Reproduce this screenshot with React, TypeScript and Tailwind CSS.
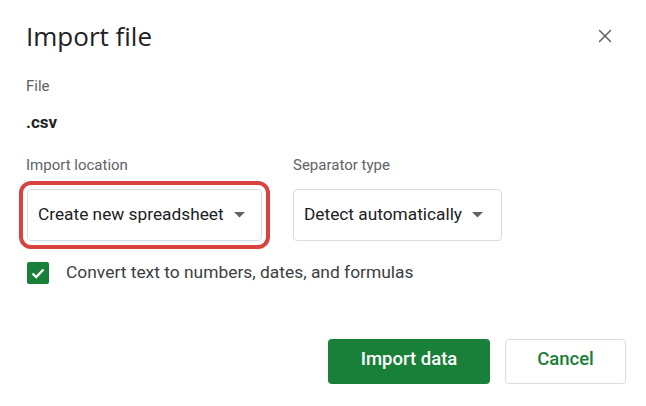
import { X } from "lucide-react"

function Caret() {
  return (
    <svg width="11" height="6" viewBox="0 0 11 6" className="ml-[10px] shrink-0">
      <path d="M0 0 L11 0 L5.5 5.5 Z" fill="#5f6368" />
    </svg>
  )
}

export default function App() {
  return (
    <div
      className="w-[646px] h-[406px] bg-white text-[#202124] flex flex-col pl-[26px] pr-[20px] pt-[20px]"
      style={{ fontFamily: "Roboto, 'Open Sans', sans-serif" }}
    >
      <div className="flex items-center justify-between">
        <h1 className="text-[26px] leading-[32px] text-[#202124]" style={{ fontFamily: "'Open Sans', Roboto, sans-serif" }}>
          Import file
        </h1>
        <X className="w-[22px] h-[22px] mr-[10px] text-[#5f6368]" strokeWidth={1.6} />
      </div>

      <div className="mt-[24px] text-[15px] leading-[20px] text-[#5f6368]">File</div>
      <div className="mt-[16px] text-[17px] leading-[20px] font-bold text-[#202124]">.csv</div>

      <div className="mt-[23px] flex">
        <div className="flex flex-col">
          <div className="text-[15px] leading-[20px] text-[#5f6368]">Import location</div>
          <div className="mt-[14px] ml-[1px] w-[235px] h-[52px] flex items-center pl-[10px] border border-[#dadce0] rounded-[4px] outline-[4px] outline-solid outline-[#d8423f] outline-offset-[4px]">
            <span className="text-[17.3px] whitespace-nowrap">Create new spreadsheet</span>
            <Caret />
          </div>
        </div>
        <div className="flex flex-col ml-[31px]">
          <div className="text-[15px] leading-[20px] text-[#5f6368]">Separator type</div>
          <div className="mt-[14px] w-[209px] h-[52px] flex items-center pl-[10px] border border-[#dadce0] rounded-[4px]">
            <span className="text-[17.3px] whitespace-nowrap">Detect automatically</span>
            <Caret />
          </div>
        </div>
      </div>

      <div className="mt-[20px] flex items-center ml-[1px]">
        <div className="w-[22px] h-[22px] rounded-[2px] bg-[#188038] flex items-center justify-center">
          <svg width="16" height="16" viewBox="0 0 16 16">
            <path d="M2.5 8.5 L6.2 12 L13.5 4.5" stroke="white" strokeWidth="2.4" fill="none" />
          </svg>
        </div>
        <span className="ml-[17px] text-[17.4px] leading-[22px] pb-[2px] text-[#3c4043]">Convert text to numbers, dates, and formulas</span>
      </div>

      <div className="mt-[54px] flex justify-end gap-[15px]">
        <button className="w-[162px] h-[45px] pb-[3px] rounded-[4px] bg-[#188038] text-white text-[18.5px] font-medium">
          Import data
        </button>
        <button className="w-[121px] h-[45px] pb-[3px] rounded-[4px] bg-white border border-[#dadce0] text-[#188038] text-[18.5px] font-medium">
          Cancel
        </button>
      </div>
    </div>
  )
}
